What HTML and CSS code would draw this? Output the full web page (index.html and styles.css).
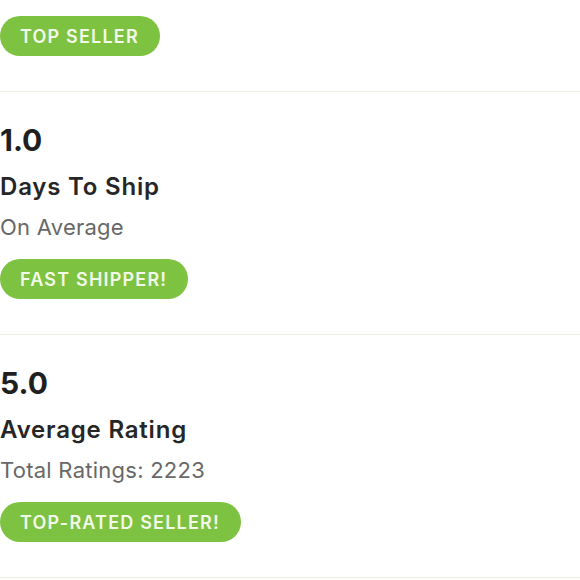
FILE: index.html
```html
<!DOCTYPE html>
<html>
<head>
<meta charset="utf-8">
<link rel="stylesheet" href="styles.css">
</head>
<body>
<div class="list">
  <section class="section first">
    <span class="badge">TOP SELLER</span>
  </section>
  <section class="section">
    <div class="value">1.0</div>
    <div class="title">Days To Ship</div>
    <div class="sub">On Average</div>
    <span class="badge">FAST SHIPPER!</span>
  </section>
  <section class="section">
    <div class="value">5.0</div>
    <div class="title">Average Rating</div>
    <div class="sub">Total Ratings: 2223</div>
    <span class="badge">TOP-RATED SELLER!</span>
  </section>
</div>
</body>
</html>
```
FILE: styles.css
```css
html, body {
  margin: 0;
  padding: 0;
  background: #ffffff;
}
body {
  font-family: "Inter", "Liberation Sans", sans-serif;
  color: #222222;
}
.list {
  display: flex;
  flex-direction: column;
}
.section {
  display: flex;
  flex-direction: column;
  align-items: flex-start;
  padding: 28px 0 35px 0;
  border-bottom: 1px solid #efece6;
}
.section.first {
  padding-top: 16px;
}
.value {
  font-size: 30px;
  font-weight: 700;
  line-height: 40px;
  color: #1f1f1f;
}
.title {
  font-size: 24px;
  font-weight: 600;
  line-height: 30px;
  margin-top: 12px;
  color: #262626;
  letter-spacing: 0.8px;
}
.sub {
  font-size: 22px;
  font-weight: 400;
  line-height: 28px;
  margin-top: 11px;
  color: #686868;
  letter-spacing: 0.25px;
}
.badge {
  display: inline-flex;
  align-items: center;
  height: 40px;
  padding: 0 21px 0 20px;
  border-radius: 20px;
  background: #7ec242;
  color: #f2f9e8;
  font-size: 18px;
  font-weight: 600;
  letter-spacing: 1.2px;
  margin-top: 18px;
}
.section.first .badge {
  margin-top: 0;
}
```
